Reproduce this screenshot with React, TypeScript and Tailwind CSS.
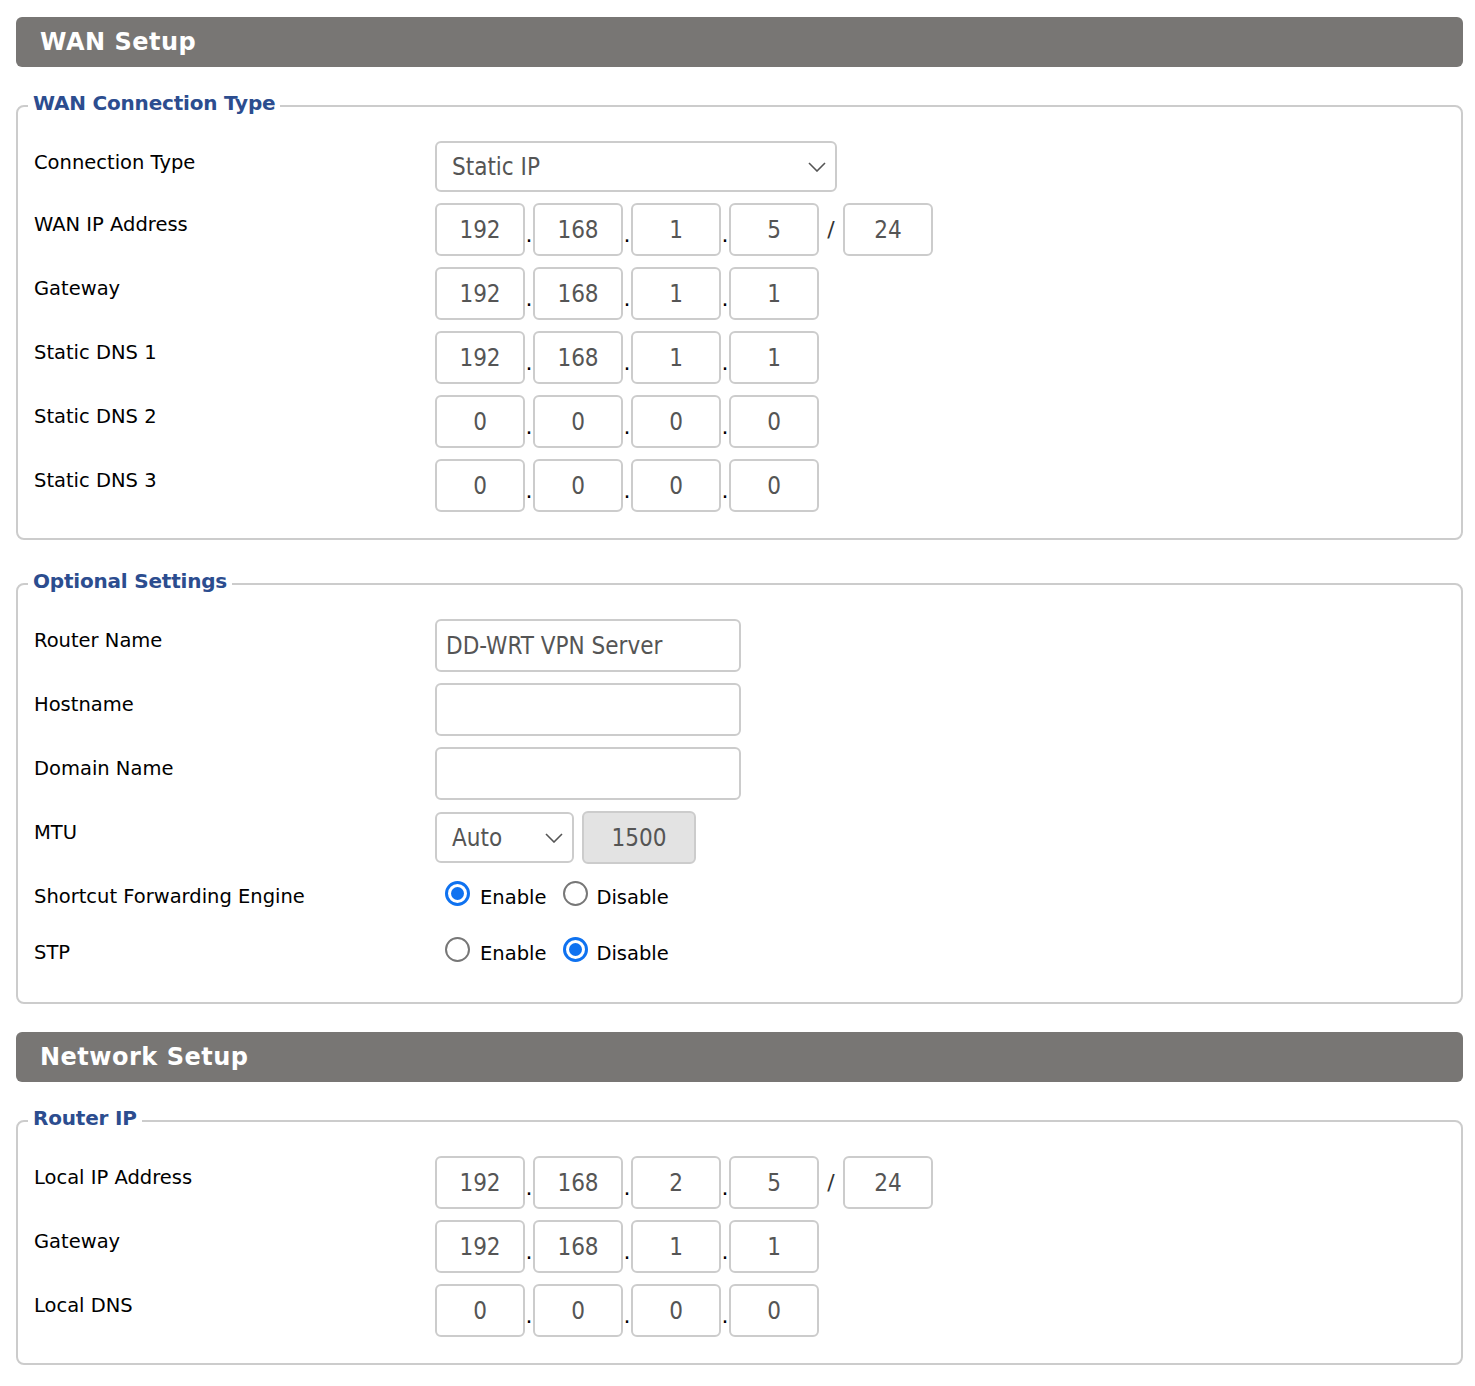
import React from "react";

const labelFont = "font-['Tahoma','DejaVu_Sans',sans-serif]";
const fieldFont = "font-['DejaVu_Sans_Condensed','DejaVu_Sans',sans-serif]";

function SectionHeader({ title }: { title: string }) {
  return (
    <div className="flex h-[50px] items-center rounded-md bg-[#787674] pl-6">
      <h2 className="text-[24px] font-bold tracking-[0.5px] text-white">{title}</h2>
    </div>
  );
}

function Group({ legend, children, className = "" }: { legend: string; children: React.ReactNode; className?: string }) {
  return (
    <fieldset className={`rounded-lg border-2 border-[#cccccc] px-4 pb-[26px] ${className}`}>
      <legend className="relative -top-[3px] ml-[-6px] px-[5px] text-[20px] font-bold leading-6 tracking-[-0.2px] text-[#2c4d8f]">
        {legend}
      </legend>
      <div className="flex flex-col gap-[11px] pt-[23px]">{children}</div>
    </fieldset>
  );
}

function Label({ text }: { text: string }) {
  return <div className="w-[401px] shrink-0 pt-[10px] text-[19.5px] leading-6 text-black">{text}</div>;
}

function Row({ label, children }: { label: string; children: React.ReactNode }) {
  return (
    <div className="flex items-start">
      <Label text={label} />
      <div className="flex items-center">{children}</div>
    </div>
  );
}

function Box({ value, className = "w-[90px] text-center" }: { value: string; className?: string }) {
  return (
    <input
      readOnly
      value={value}
      className={`h-[53px] rounded-md border-2 border-[#cccccc] bg-white text-[24px] text-[#555555] outline-none ${fieldFont} ${className}`}
    />
  );
}

function Dot() {
  return <span className="flex h-[53px] w-[8px] items-center justify-center pt-[10px] text-[22px] leading-none text-black">.</span>;
}

function IpRow({ label, parts, mask }: { label: string; parts: string[]; mask?: string }) {
  return (
    <Row label={label}>
      {parts.map((p, i) => (
        <React.Fragment key={i}>
          {i > 0 && <Dot />}
          <Box value={p} />
        </React.Fragment>
      ))}
      {mask && (
        <>
          <span className="flex h-[53px] w-[24px] items-center justify-center text-[22px] text-[#333333]">/</span>
          <Box value={mask} />
        </>
      )}
    </Row>
  );
}

function Select({ value, width }: { value: string; width: string }) {
  return (
    <div
      className={`flex h-[51px] items-center justify-between rounded-md border-2 border-[#cccccc] bg-white pl-[15px] pr-[9px] text-[24px] text-[#555555] ${fieldFont} ${width}`}
    >
      <span>{value}</span>
      <svg width="18" height="10" viewBox="0 0 18 10" fill="none" stroke="#555555" strokeWidth="1.6">
        <path d="M1 1l8 8 8-8" />
      </svg>
    </div>
  );
}

function Radio({ checked }: { checked: boolean }) {
  return checked ? (
    <span className="mt-[6px] flex h-[25px] w-[25px] shrink-0 items-center justify-center rounded-full border-[3px] border-[#0f72f0] bg-white">
      <span className="block h-[13px] w-[13px] rounded-full bg-[#0f72f0]" />
    </span>
  ) : (
    <span className="mt-[6px] block h-[25px] w-[25px] shrink-0 rounded-full border-2 border-[#777777] bg-white" />
  );
}

function RadioRow({ label, enabled }: { label: string; enabled: boolean }) {
  return (
    <div className="flex h-[45px] items-start">
      <Label text={label} />
      <div className="flex items-start pl-[10px] text-[19.5px] leading-6 text-black">
        <Radio checked={enabled} />
        <span className="ml-[10px] mt-[11px]">Enable</span>
        <span className="ml-[17px] flex">
          <Radio checked={!enabled} />
        </span>
        <span className="ml-[8px] mt-[11px]">Disable</span>
      </div>
    </div>
  );
}

export default function App() {
  return (
    <div className={`min-h-screen bg-white pb-[22px] pl-4 pr-3 pt-[17px] ${labelFont}`}>
      <SectionHeader title="WAN Setup" />

      <Group legend="WAN Connection Type" className="mt-[27px]">
        <Row label="Connection Type">
          <Select value="Static IP" width="w-[402px]" />
        </Row>
        <IpRow label="WAN IP Address" parts={["192", "168", "1", "5"]} mask="24" />
        <IpRow label="Gateway" parts={["192", "168", "1", "1"]} />
        <IpRow label="Static DNS 1" parts={["192", "168", "1", "1"]} />
        <IpRow label="Static DNS 2" parts={["0", "0", "0", "0"]} />
        <IpRow label="Static DNS 3" parts={["0", "0", "0", "0"]} />
      </Group>

      <Group legend="Optional Settings" className="mt-[32px]">
        <Row label="Router Name">
          <Box value="DD-WRT VPN Server" className="w-[306px] px-[9px]" />
        </Row>
        <Row label="Hostname">
          <Box value="" className="w-[306px] px-[9px]" />
        </Row>
        <Row label="Domain Name">
          <Box value="" className="w-[306px] px-[9px]" />
        </Row>
        <Row label="MTU">
          <div className="flex items-center gap-[8px]">
            <div className="flex h-[53px] items-center">
              <Select value="Auto" width="w-[139px]" />
            </div>
            <input
              readOnly
              value="1500"
              className={`h-[53px] w-[114px] rounded-md border-2 border-[#cccccc] bg-[#e3e3e3] text-center text-[24px] text-[#555555] outline-none ${fieldFont}`}
            />
          </div>
        </Row>
        <RadioRow label="Shortcut Forwarding Engine" enabled={true} />
        <RadioRow label="STP" enabled={false} />
      </Group>

      <div className="mt-[28px]">
        <SectionHeader title="Network Setup" />
      </div>

      <Group legend="Router IP" className="mt-[27px]">
        <IpRow label="Local IP Address" parts={["192", "168", "2", "5"]} mask="24" />
        <IpRow label="Gateway" parts={["192", "168", "1", "1"]} />
        <IpRow label="Local DNS" parts={["0", "0", "0", "0"]} />
      </Group>
    </div>
  );
}
